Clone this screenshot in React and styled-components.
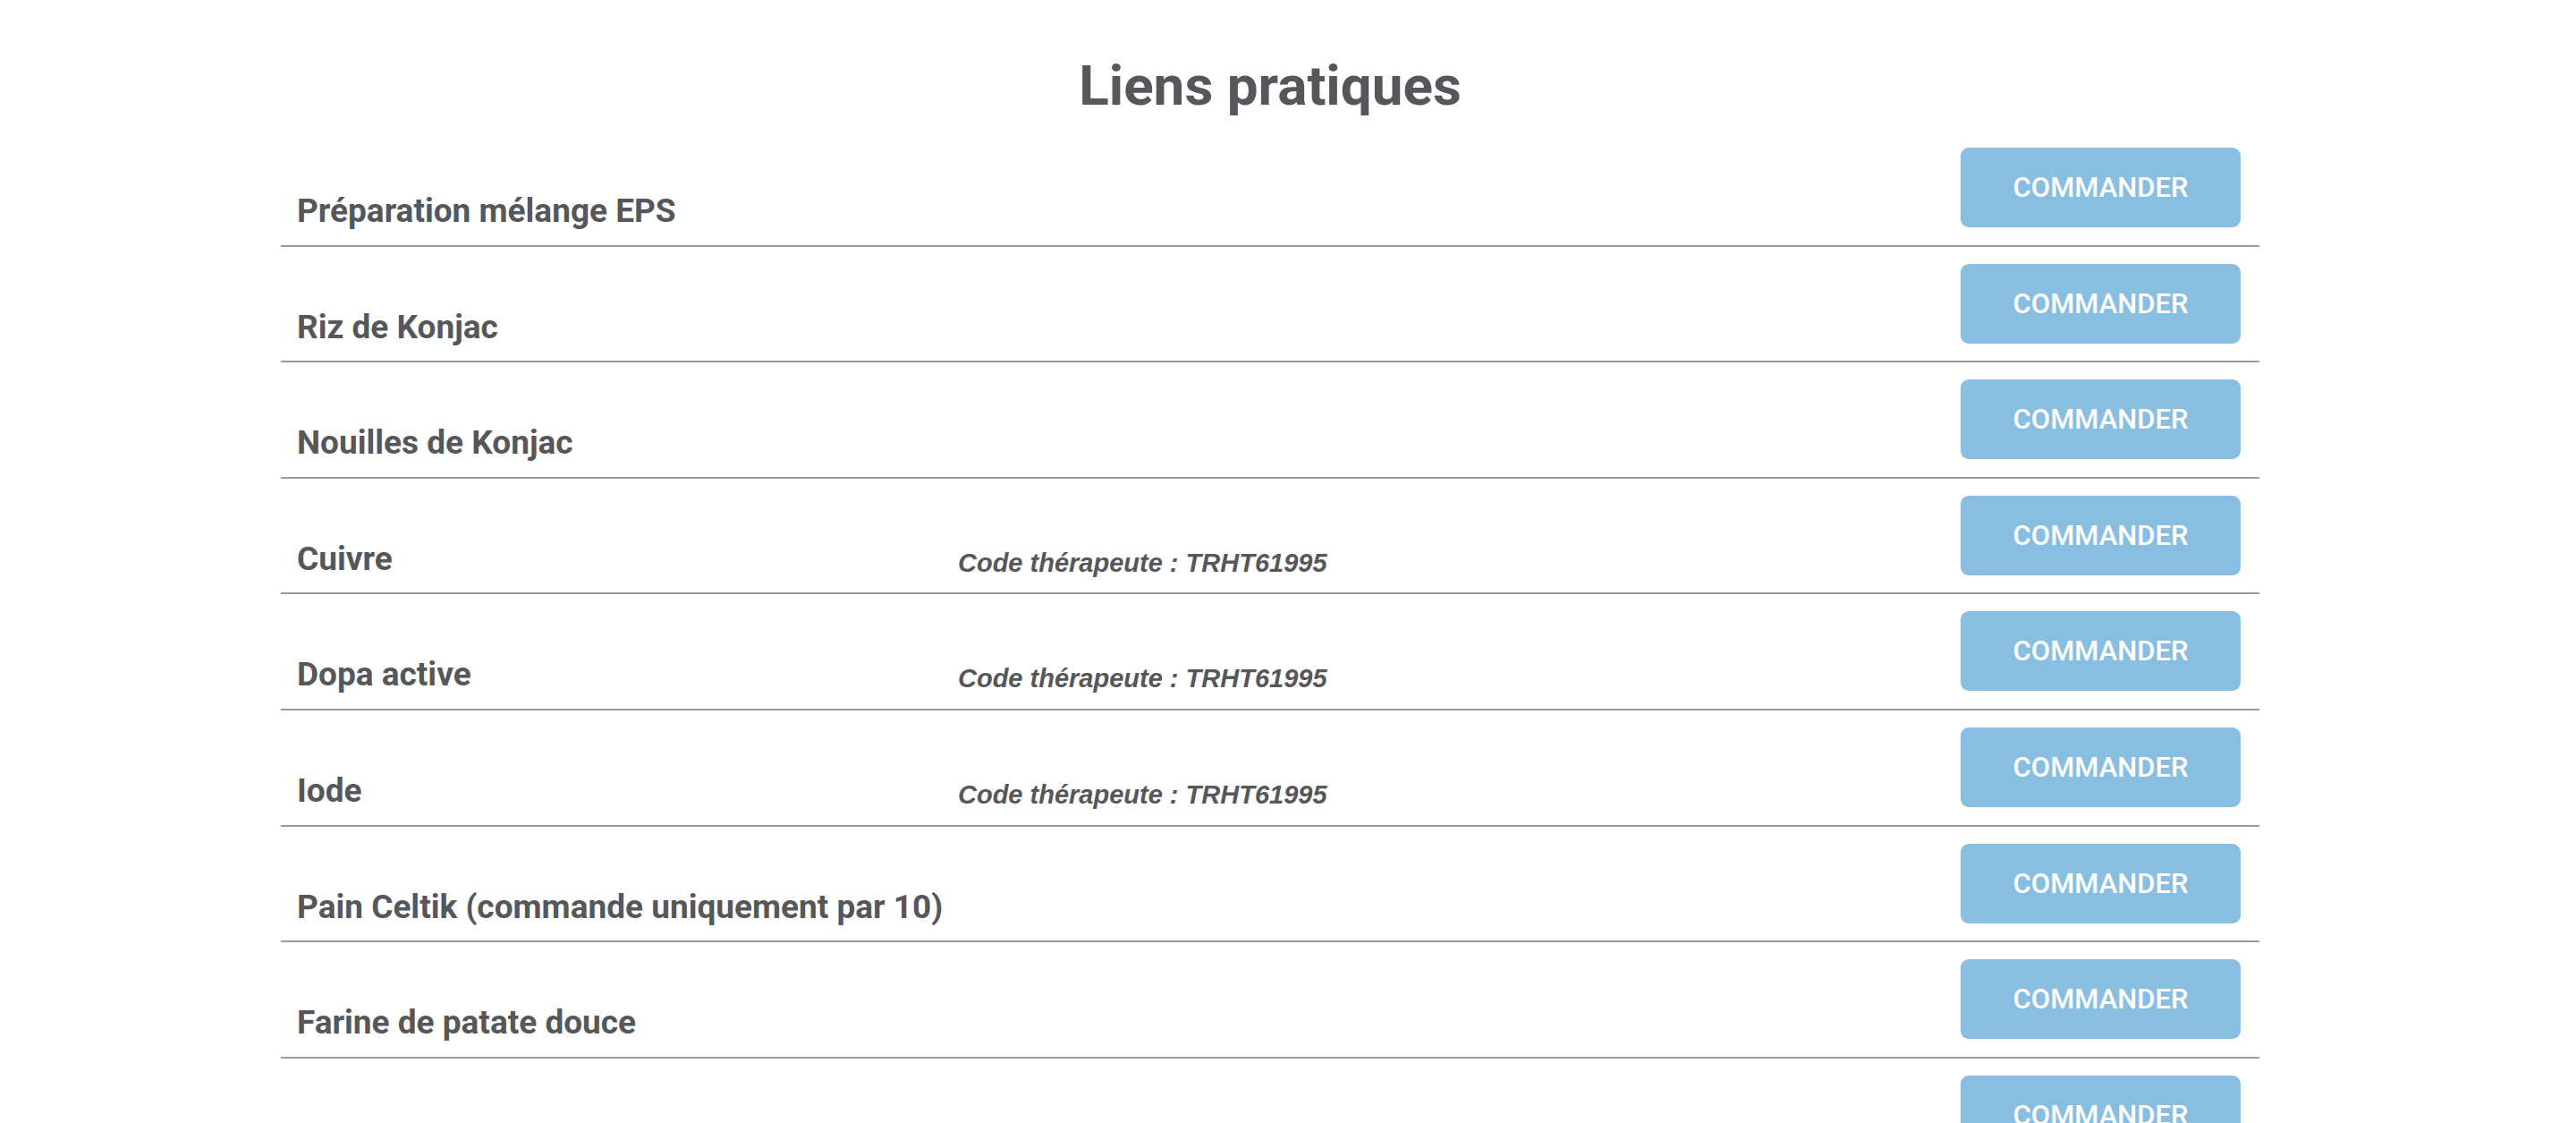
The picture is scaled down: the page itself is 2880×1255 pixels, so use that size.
import styled, { createGlobalStyle } from 'styled-components'

const GlobalStyle = createGlobalStyle`
  html, body {
    margin: 0;
    padding: 0;
    background: #fff;
  }
  body {
    font-family: Roboto, "Liberation Sans", Arial, sans-serif;
    color: #55575b;
  }
`

const Page = styled.main`
  width: 2212px;
  margin: 0 0 0 314px;
  padding-top: 60px;
`

const Title = styled.h1`
  margin: 0 0 14px;
  text-align: center;
  font-family: Roboto, sans-serif;
  font-weight: 700;
  font-size: 62px;
  line-height: 72px;
  color: #55575b;
`

const List = styled.ul`
  list-style: none;
  margin: 0;
  padding: 0;
`

const Row = styled.li`
  display: flex;
  align-items: flex-end;
  padding: 19px 21px 19.6px 18px;
  border-bottom: 2px solid #9a9a9a;
`

const Label = styled.h3`
  flex: 0 0 739px;
  margin: 0 0 -3px;
  font-family: Roboto, sans-serif;
  font-weight: 700;
  font-size: 37px;
  line-height: 42px;
  color: #55575b;
  white-space: nowrap;
`

const Code = styled.span`
  flex: 1;
  margin-bottom: -3px;
  font-family: "Liberation Sans", Arial, sans-serif;
  font-weight: 700;
  font-style: italic;
  font-size: 29px;
  line-height: 34px;
  color: #55575b;
`

const Button = styled.a`
  flex: 0 0 313px;
  height: 89px;
  margin-left: auto;
  display: flex;
  align-items: center;
  justify-content: center;
  background: #88bee1;
  border-radius: 9px;
  color: #fff;
  font-family: Roboto, sans-serif;
  font-weight: 500;
  font-size: 31px;
  text-decoration: none;
  text-transform: uppercase;
  cursor: pointer;
`

const links = [
  { name: 'Préparation mélange EPS' },
  { name: 'Riz de Konjac' },
  { name: 'Nouilles de Konjac' },
  { name: 'Cuivre', code: 'TRHT61995' },
  { name: 'Dopa active', code: 'TRHT61995' },
  { name: 'Iode', code: 'TRHT61995' },
  { name: 'Pain Celtik (commande uniquement par 10)' },
  { name: 'Farine de patate douce' },
  { name: 'Sucre de coco' }
]

const App = () => {
  return (
    <>
      <GlobalStyle />
      <Page>
        <Title>Liens pratiques</Title>
        <List>
          {links.map(link =>
            <Row key={link.name}>
              <Label>{link.name}</Label>
              {link.code && <Code>Code thérapeute : {link.code}</Code>}
              <Button href="#">Commander</Button>
            </Row>
          )}
        </List>
      </Page>
    </>
  )
}

export default App
